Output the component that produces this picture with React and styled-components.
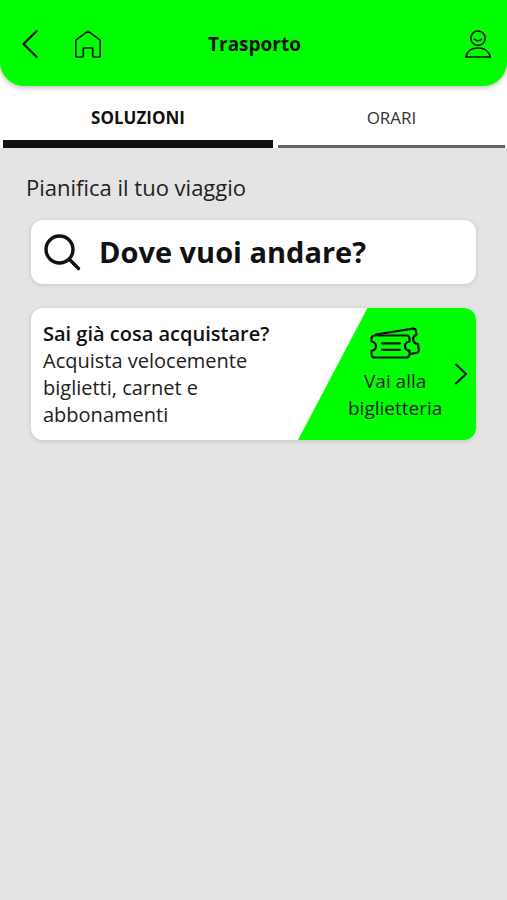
import React, { useState } from "react";
import styled, { createGlobalStyle } from "styled-components";

const GlobalStyle = createGlobalStyle`
  *, *::before, *::after { box-sizing: border-box; }
  body {
    margin: 0;
    background: #e4e4e4;
    color: #111;
    font-family: "Open Sans", "Noto Sans", sans-serif;
  }
  button, input { font: inherit; color: inherit; }
`;

const GREEN = "#00ff00";

const Top = styled.div`
  background: #fff;
`;

const Header = styled.header`
  display: grid;
  grid-template-columns: 1fr auto 1fr;
  align-items: center;
  height: 86px;
  padding: 2px 14px 0 16px;
  background: ${GREEN};
  border-radius: 0 0 24px 24px;
  box-shadow: 0 2px 5px rgba(0, 0, 0, 0.25);
`;

const HeaderSide = styled.div`
  display: flex;
  gap: 28px;
  justify-content: ${(p) => (p.$end ? "flex-end" : "flex-start")};
`;

const IconButton = styled.button`
  display: flex;
  padding: 0;
  border: 0;
  background: none;
  cursor: pointer;
`;

const Title = styled.h1`
  margin: 0;
  font-size: 19px;
  line-height: 26px;
  font-weight: 700;
`;

const Tabs = styled.div`
  display: grid;
  grid-template-columns: 270fr 227fr;
  gap: 5px;
  padding: 0 2px 0 3px;
`;

const Tab = styled.button`
  height: 62px;
  padding: 2px 0 0;
  border: 0;
  background: linear-gradient(
    to top,
    ${(p) => (p.$active ? "#111 8px, transparent 8px" : "#666 3px, transparent 3px")}
  );
  font-size: 17px;
  line-height: 24px;
  font-weight: ${(p) => (p.$active ? 700 : 400)};
  color: ${(p) => (p.$active ? "#111" : "#333")};
  cursor: pointer;
`;

const Content = styled.main`
  padding: 24px 31px 40px;
`;

const SectionTitle = styled.h2`
  margin: 0 0 18px -5px;
  font-size: 22px;
  line-height: 30px;
  font-weight: 400;
  color: #222;
`;

const SearchBox = styled.label`
  display: flex;
  align-items: center;
  gap: 18px;
  height: 64px;
  padding: 0 12px;
  border-radius: 12px;
  background: #fff;
  box-shadow: 0 1px 5px rgba(0, 0, 0, 0.14);
`;

const SearchInput = styled.input`
  flex: 1;
  min-width: 0;
  padding: 0;
  border: 0;
  outline: 0;
  background: none;
  font-size: 29px;
  line-height: 40px;
  font-weight: 700;
  &::placeholder { color: #111; opacity: 1; }
`;

const TicketCard = styled.a`
  display: flex;
  margin-top: 24px;
  overflow: hidden;
  border-radius: 12px;
  background: #fff;
  box-shadow: 0 1px 5px rgba(0, 0, 0, 0.14);
  color: #222;
  font-size: 19px;
  line-height: 27px;
  text-decoration: none;
`;

const CardText = styled.div`
  flex: 1;
  min-width: 0;
  padding: 12px 0 12px 12px;
  font-size: 20px;
`;

const CardTitle = styled.strong`
  display: block;
  color: #111;
  font-weight: 650;
  white-space: nowrap;
`;

const CardAction = styled.div`
  display: flex;
  align-items: center;
  justify-content: space-between;
  flex: none;
  width: 178px;
  padding: 0 8px 0 50px;
  background: ${GREEN};
  clip-path: polygon(39% 0, 100% 0, 100% 100%, 0 100%);
`;

const ActionLabel = styled.div`
  display: flex;
  flex-direction: column;
  align-items: center;
  gap: 9px;
  width: min-content;
  text-align: center;
`;

const Stroke = styled.svg`
  flex: none;
  fill: none;
  stroke: #111;
  stroke-linecap: round;
  stroke-linejoin: round;
`;

const BackIcon = () => (
  <Stroke width="30" height="30" viewBox="0 0 30 30" strokeWidth="2.2">
    <path d="M20.7 2 7.5 15l13.2 13" />
  </Stroke>
);

const HomeIcon = () => (
  <Stroke width="28" height="30" viewBox="0 0 28 30" strokeWidth="1.6">
    <path d="M14 2.1 2.8 10.3a2 2 0 0 0-1 1.7v14.5a1.5 1.5 0 0 0 1.5 1.5H8a1.3 1.3 0 0 0 1.3-1.3V19h9.4v7.7A1.3 1.3 0 0 0 20 28h4.7a1.5 1.5 0 0 0 1.5-1.5V12a2 2 0 0 0-1-1.7Z" />
  </Stroke>
);

const UserIcon = () => (
  <Stroke width="30" height="30" viewBox="0 0 30 30" strokeWidth="1.6">
    <circle cx="15" cy="9.2" r="7.2" />
    <path d="M11.5 10.3c1.8 2 5.2 2 7 0M2.8 28C4 22.3 8.5 19 15 19s11 3.3 12.4 9Z" />
  </Stroke>
);

const SearchIcon = () => (
  <Stroke width="38" height="38" viewBox="0 0 38 38" strokeWidth="3.4">
    <circle cx="16.5" cy="16.5" r="13.5" />
    <path d="M26.5 26.5l9 9" />
  </Stroke>
);

const TicketIcon = () => (
  <Stroke width="50" height="32" viewBox="0 0 50 32" strokeWidth="2.2">
    <path d="M4.5 8.5h32a3 3 0 0 1 3 3v3c-2.5.6-4.5 2.2-4.5 4.7s2 4.1 4.5 4.7v3.6a3 3 0 0 1-3 3h-32a3 3 0 0 1-3-3v-3.6C4 23.3 6 21.7 6 19.2s-2-4.100-4.500-4.700v-3a3 3 0 0 1 3-3Z" />
    <path d="M6 7.5 43 1.6a2.4 2.4 0 0 1 2.8 2l.7 4.2c-2.2 1-3.7 2.9-3.3 5.2.4 2.3 2.3 3.7 4.8 4l.8 5.8a2.8 2.8 0 0 1-2.4 3.2l-5.9.8M12 16.3h18M12 22.8h18" />
  </Stroke>
);

const ForwardIcon = () => (
  <Stroke width="14" height="22" viewBox="0 0 14 22" strokeWidth="1.9">
    <path d="M2 1.5 12 11 2 20.5" />
  </Stroke>
);

const TABS = ["SOLUZIONI", "ORARI"];

export default function App() {
  const [active, setActive] = useState(TABS[0]);
  return (
    <>
      <GlobalStyle />
      <Top>
        <Header>
          <HeaderSide>
            <IconButton aria-label="Indietro"><BackIcon /></IconButton>
            <IconButton aria-label="Home"><HomeIcon /></IconButton>
          </HeaderSide>
          <Title>Trasporto</Title>
          <HeaderSide $end>
            <IconButton aria-label="Profilo"><UserIcon /></IconButton>
          </HeaderSide>
        </Header>
        <Tabs role="tablist">
          {TABS.map((name) => (
            <Tab
              key={name}
              role="tab"
              aria-selected={active === name}
              $active={active === name}
              onClick={() => setActive(name)}
            >
              {name}
            </Tab>
          ))}
        </Tabs>
      </Top>
      <Content>
        <SectionTitle>Pianifica il tuo viaggio</SectionTitle>
        <SearchBox>
          <SearchIcon />
          <SearchInput type="text" aria-label="Dove vuoi andare?" placeholder="Dove vuoi andare?" />
        </SearchBox>
        <TicketCard href="#biglietteria">
          <CardText>
            <CardTitle>Sai già cosa acquistare?</CardTitle>
            Acquista velocemente biglietti, carnet e abbonamenti
          </CardText>
          <CardAction>
            <ActionLabel>
              <TicketIcon />
              Vai alla biglietteria
            </ActionLabel>
            <ForwardIcon />
          </CardAction>
        </TicketCard>
      </Content>
    </>
  );
}
